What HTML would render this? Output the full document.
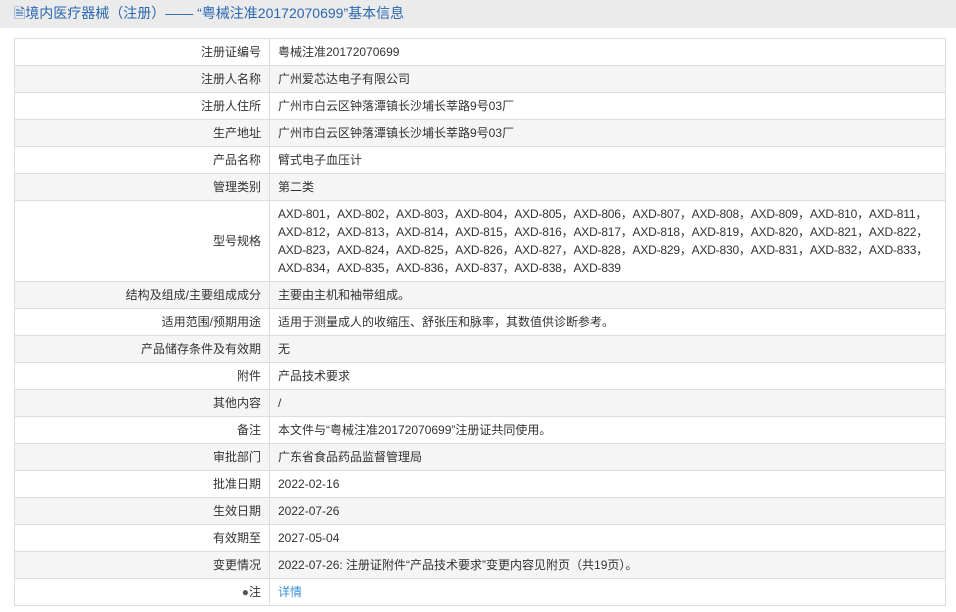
<!DOCTYPE html>
<html><head><meta charset="utf-8"><style>
body{margin:0;background:#fff;font-family:"Liberation Sans","Noto Sans CJK SC",sans-serif;font-size:12px;color:#333;width:956px;height:612px;overflow:hidden}
.hd{height:28px;background:#ebebeb;color:#2a67b1;font-size:14px;line-height:27px;padding-left:14px}
table{position:absolute;left:14px;top:38px;width:932px;border-collapse:collapse}
td{border:1px solid #dcdcdc;height:26px;padding:0 8px;line-height:18px}
td.l{width:238px;text-align:right;padding-right:8px}
tr:nth-child(even) td{background:#f5f5f5}
a{color:#3b8fd8;text-decoration:none}
.m{white-space:nowrap;letter-spacing:-0.2px}
</style></head><body>
<div class="hd">🗎境内医疗器械（注册）—— “粤械注准20172070699”基本信息</div>
<table>
<tr><td class="l">注册证编号</td><td>粤械注准20172070699</td></tr>
<tr><td class="l">注册人名称</td><td>广州爱芯达电子有限公司</td></tr>
<tr><td class="l">注册人住所</td><td>广州市白云区钟落潭镇长沙埔长莘路9号03厂</td></tr>
<tr><td class="l">生产地址</td><td>广州市白云区钟落潭镇长沙埔长莘路9号03厂</td></tr>
<tr><td class="l">产品名称</td><td>臂式电子血压计</td></tr>
<tr><td class="l">管理类别</td><td>第二类</td></tr>
<tr><td class="l" style="height:80px">型号规格</td><td class="m" style="padding-top:3px;padding-bottom:3px">AXD-801，AXD-802，AXD-803，AXD-804，AXD-805，AXD-806，AXD-807，AXD-808，AXD-809，AXD-810，AXD-811，<br>AXD-812，AXD-813，AXD-814，AXD-815，AXD-816，AXD-817，AXD-818，AXD-819，AXD-820，AXD-821，AXD-822，<br>AXD-823，AXD-824，AXD-825，AXD-826，AXD-827，AXD-828，AXD-829，AXD-830，AXD-831，AXD-832，AXD-833，<br>AXD-834，AXD-835，AXD-836，AXD-837，AXD-838，AXD-839</td></tr>
<tr><td class="l">结构及组成/主要组成成分</td><td>主要由主机和袖带组成。</td></tr>
<tr><td class="l">适用范围/预期用途</td><td>适用于测量成人的收缩压、舒张压和脉率，其数值供诊断参考。</td></tr>
<tr><td class="l">产品储存条件及有效期</td><td>无</td></tr>
<tr><td class="l">附件</td><td>产品技术要求</td></tr>
<tr><td class="l">其他内容</td><td>/</td></tr>
<tr><td class="l">备注</td><td>本文件与“粤械注准20172070699”注册证共同使用。</td></tr>
<tr><td class="l">审批部门</td><td>广东省食品药品监督管理局</td></tr>
<tr><td class="l">批准日期</td><td>2022-02-16</td></tr>
<tr><td class="l">生效日期</td><td>2022-07-26</td></tr>
<tr><td class="l">有效期至</td><td>2027-05-04</td></tr>
<tr><td class="l">变更情况</td><td>2022-07-26: 注册证附件“产品技术要求”变更内容见附页（共19页）。</td></tr>
<tr><td class="l"><span style="color:#555">●</span>注</td><td><a>详情</a></td></tr>
</table>
</body></html>
